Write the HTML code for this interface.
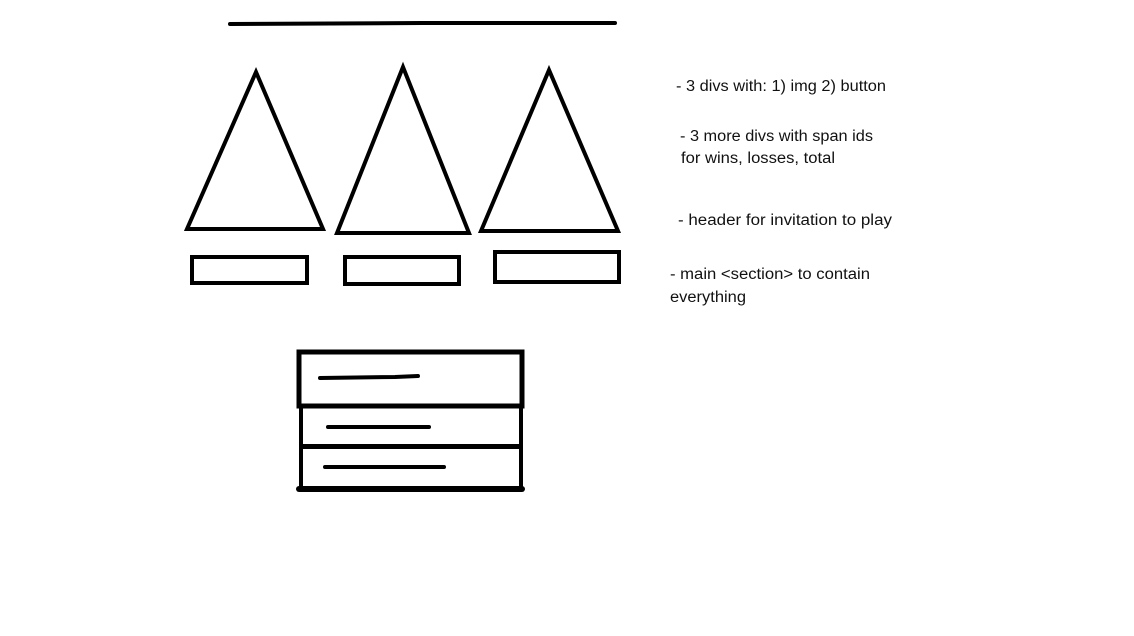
<!DOCTYPE html>
<html><head><meta charset="utf-8"><style>
html,body{margin:0;padding:0;background:#fff;width:1134px;height:636px;overflow:hidden}
svg{display:block}
text{font-family:"Liberation Sans",sans-serif;font-size:15.5px;fill:#111}
</style></head><body>
<svg width="1134" height="636" viewBox="0 0 1134 636">
<g fill="none" stroke="#000" stroke-width="4" stroke-linejoin="miter" stroke-linecap="round">
<path d="M230 24 L422 23 L615 23"/>
<path d="M256 72 L187 229 L323 229 Z"/>
<path d="M403 67 L337 233 L469 233 Z"/>
<path d="M549 70 L481 231 L618 231 Z"/>
<rect x="192" y="257" width="115" height="26"/>
<rect x="345" y="257" width="114" height="27"/>
<rect x="495" y="252" width="124" height="30"/>
<rect x="299" y="352" width="223" height="54" stroke-width="5"/>
<rect x="301" y="406" width="220" height="40"/>
<rect x="301" y="447" width="220" height="42"/>
<path d="M299 489 L522 489" stroke-width="6"/>
<path d="M320 378 L395 377 L418 376" stroke-width="4"/>
<path d="M328 427 L429 427" stroke-width="4"/>
<path d="M325 467 L444 467" stroke-width="4"/>
</g>
<text x="676" y="91" textLength="210" lengthAdjust="spacingAndGlyphs">- 3 divs with: 1) img 2) button</text>
<text x="680" y="141" textLength="193" lengthAdjust="spacingAndGlyphs">- 3 more divs with span ids</text>
<text x="681" y="163" textLength="154" lengthAdjust="spacingAndGlyphs">for wins, losses, total</text>
<text x="678" y="225" textLength="214" lengthAdjust="spacingAndGlyphs">- header for invitation to play</text>
<text x="670" y="279" textLength="200" lengthAdjust="spacingAndGlyphs">- main &lt;section&gt; to contain</text>
<text x="670" y="302" textLength="76" lengthAdjust="spacingAndGlyphs">everything</text>
</svg>
</body></html>
